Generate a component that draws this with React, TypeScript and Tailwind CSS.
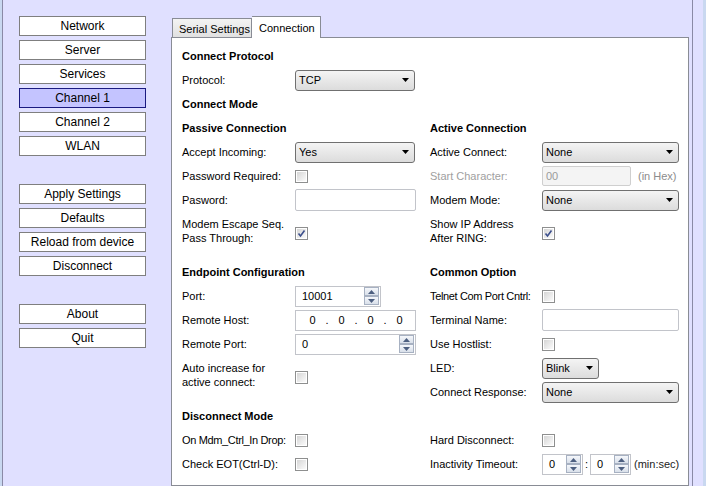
import React from "react";

const SideButton = ({ label, active = false }: { label: string; active?: boolean }) => (
  <div
    className={
      active
        ? "flex h-[20px] w-[127px] items-center justify-center border border-[#1a1a80] bg-[#c4c4ff] text-[12px] text-black"
        : "flex h-[20px] w-[127px] items-center justify-center border border-[#7f7f7f] bg-white text-[12px] text-black"
    }
  >
    {label}
  </div>
);

const Select = ({ value, className }: { value: string; className: string }) => (
  <div
    className={`flex h-[21px] items-center justify-between rounded-[3px] border border-[#707070] bg-gradient-to-b from-[#f4f4f4] to-[#dcdcdc] pl-[3px] pr-[5px] ${className}`}
  >
    <span>{value}</span>
    <svg width="7" height="4" viewBox="0 0 7 4">
      <polygon points="0,0 7,0 3.5,4" fill="#000" />
    </svg>
  </div>
);

const Check = ({ checked = false }: { checked?: boolean }) => (
  <div className="flex h-[13px] w-[13px] items-center justify-center border border-[#8e8f8f] bg-white">
    <div className="flex h-[9px] w-[9px] items-center justify-center bg-gradient-to-br from-[#d6d6d6] to-[#fbfbfb]">
      {checked && (
        <svg width="9" height="9" viewBox="0 0 9 9">
          <path d="M1.5 4.5 L3.5 7 L7.5 1.5" stroke="#3c4f8c" strokeWidth="1.6" fill="none" />
        </svg>
      )}
    </div>
  </div>
);

const TextBox = ({ className, value = "", disabled = false }: { className: string; value?: string; disabled?: boolean }) => (
  <div
    className={
      disabled
        ? `flex items-center rounded-[2px] border border-[#cfcfcf] bg-[#f4f4f4] pl-[3px] text-[#9a9a9a] ${className}`
        : `flex items-center rounded-[2px] border border-[#c2c4ca] bg-white pl-[3px] ${className}`
    }
  >
    {value}
  </div>
);

const SpinArrow = ({ up }: { up: boolean }) => (
  <div className="flex h-[9px] w-[15px] items-center justify-center border border-[#a7b1c2] bg-gradient-to-b from-[#f5f7fb] to-[#d9e0ea]">
    <svg width="7" height="4" viewBox="0 0 7 4">
      <polygon points={up ? "0,4 7,4 3.5,0" : "0,0 7,0 3.5,4"} fill="#4d5f80" />
    </svg>
  </div>
);

const Spin = ({ value, className, pad }: { value: string; className: string; pad: string }) => (
  <div className={`flex h-[21px] items-center border border-[#c2c4ca] bg-white pr-px ${className}`}>
    <span className={`flex-1 ${pad}`}>{value}</span>
    <div className="flex flex-col">
      <SpinArrow up />
      <SpinArrow up={false} />
    </div>
  </div>
);

const Row = ({
  label,
  children,
  labelW = "w-[113px]",
  muted = false,
  tight = false,
}: {
  label: string;
  children?: React.ReactNode;
  labelW?: string;
  muted?: boolean;
  tight?: boolean;
}) => (
  <div className="flex h-6 items-center">
    <span
      className={`${labelW} shrink-0 whitespace-nowrap ${muted ? "text-[#a0a0a0]" : ""} ${tight ? "tracking-[-0.35px]" : ""}`}
    >
      {label}
    </span>
    {children}
  </div>
);

const TallRow = ({ lines, children, labelW = "w-[113px]" }: { lines: string[]; children?: React.ReactNode; labelW?: string }) => (
  <div className="flex h-12 items-start">
    <span className={`${labelW} shrink-0 pt-[5px] leading-[14px]`}>
      {lines[0]}
      <br />
      {lines[1]}
    </span>
    <div className="mt-[15px]">{children}</div>
  </div>
);

const Heading = ({ children }: { children: React.ReactNode }) => (
  <div className="flex h-6 items-center font-bold">{children}</div>
);

const Ip = () => (
  <div className="flex h-[21px] w-[121px] items-center border border-[#c2c4ca] bg-white pl-[13px]">
    <span className="w-[7px] text-center">0</span>
    <span className="w-[22px] text-center">.</span>
    <span className="w-[7px] text-center">0</span>
    <span className="w-[22px] text-center">.</span>
    <span className="w-[7px] text-center">0</span>
    <span className="w-[22px] text-center">.</span>
    <span className="w-[7px] text-center">0</span>
  </div>
);

export default function App() {
  return (
    <div className="flex h-[486px] w-[706px] overflow-hidden bg-[#e0e0ff] font-['Liberation_Sans',Arial,sans-serif] text-[11px] text-black">
      <div className="w-[2px] bg-[#c9d8f0]" />
      <div className="w-px bg-[#8a8aa6]" />

      <div className="flex w-[168px] flex-col gap-[4px] pl-[16px] pt-[16px]">
        <SideButton label="Network" />
        <SideButton label="Server" />
        <SideButton label="Services" />
        <SideButton label="Channel 1" active />
        <SideButton label="Channel 2" />
        <SideButton label="WLAN" />
        <div className="mt-[24px]">
          <SideButton label="Apply Settings" />
        </div>
        <SideButton label="Defaults" />
        <SideButton label="Reload from device" />
        <SideButton label="Disconnect" />
        <div className="mt-[24px]">
          <SideButton label="About" />
        </div>
        <SideButton label="Quit" />
      </div>

      <div className="flex w-[518px] flex-col pt-[16px]">
        <div className="relative z-10 -mb-px flex h-[22px] items-end pl-px">
          <div className="mb-px flex h-[19px] w-[80px] items-center border border-b-0 border-[#898c95] bg-gradient-to-b from-[#f3f3f3] to-[#e1e1e1] pl-[6px] pt-[2px]">
            Serial Settings
          </div>
          <div className="flex h-[22px] w-[69px] items-start border border-b-0 border-l-0 border-[#898c95] bg-white pl-[7px] pt-[3px]">
            Connection
          </div>
        </div>

        <div className="flex-1 border border-[#898c95] bg-white pl-[10px] pt-[6px]">
          <Heading>Connect Protocol</Heading>
          <Row label="Protocol:">
            <Select value="TCP" className="w-[120px]" />
          </Row>
          <Heading>Connect Mode</Heading>

          <div className="flex">
            <div className="flex w-[248px] flex-col">
              <Heading>Passive Connection</Heading>
              <Row label="Accept Incoming:">
                <Select value="Yes" className="w-[120px]" />
              </Row>
              <Row label="Password Required:">
                <Check />
              </Row>
              <Row label="Pasword:">
                <TextBox className="h-[22px] w-[121px]" />
              </Row>
              <TallRow lines={["Modem Escape Seq.", "Pass Through:"]}>
                <Check checked />
              </TallRow>

              <Heading>Endpoint Configuration</Heading>
              <Row label="Port:">
                <Spin value="10001" className="w-[86px]" pad="pl-[6px]" />
              </Row>
              <Row label="Remote Host:">
                <Ip />
              </Row>
              <Row label="Remote Port:">
                <Spin value="0" className="w-[121px]" pad="pl-[6px]" />
              </Row>
              <TallRow lines={["Auto increase for", "active connect:"]}>
                <Check />
              </TallRow>

              <Heading>Disconnect Mode</Heading>
              <Row label="On Mdm_Ctrl_In Drop:" tight>
                <Check />
              </Row>
              <Row label="Check EOT(Ctrl-D):">
                <Check />
              </Row>
            </div>

            <div className="flex flex-col">
              <Heading>Active Connection</Heading>
              <Row label="Active Connect:" labelW="w-[112px]">
                <Select value="None" className="w-[137px]" />
              </Row>
              <Row label="Start Character:" labelW="w-[112px]" muted>
                <TextBox className="h-[20px] w-[89px]" value="00" disabled />
                <span className="ml-[7px] text-[#8c8c8c]">(in Hex)</span>
              </Row>
              <Row label="Modem Mode:" labelW="w-[112px]">
                <Select value="None" className="w-[137px]" />
              </Row>
              <TallRow lines={["Show IP Address", "After RING:"]} labelW="w-[112px]">
                <Check checked />
              </TallRow>

              <Heading>Common Option</Heading>
              <Row label="Telnet Com Port Cntrl:" labelW="w-[112px]" tight>
                <Check />
              </Row>
              <Row label="Terminal Name:" labelW="w-[112px]">
                <TextBox className="h-[22px] w-[137px]" />
              </Row>
              <Row label="Use Hostlist:" labelW="w-[112px]">
                <Check />
              </Row>
              <Row label="LED:" labelW="w-[112px]">
                <Select value="Blink" className="w-[57px]" />
              </Row>
              <Row label="Connect Response:" labelW="w-[112px]">
                <Select value="None" className="w-[137px]" />
              </Row>
              <div className="h-6" />
              <Row label="Hard Disconnect:" labelW="w-[112px]">
                <Check />
              </Row>
              <Row label="Inactivity Timeout:" labelW="w-[112px]">
                <Spin value="0" className="w-[41px]" pad="pl-[6px]" />
                <span className="w-[7px] text-center">:</span>
                <Spin value="0" className="w-[41px]" pad="pl-[6px]" />
                <span className="ml-[3px] text-[#222]">(min:sec)</span>
              </Row>
            </div>
          </div>
        </div>
      </div>

      <div className="w-[3px]" />
      <div className="w-px bg-[#8a8aa6]" />
      <div className="flex-1" />
      <div className="w-[3px] bg-[#c9d8f0]" />
    </div>
  );
}
